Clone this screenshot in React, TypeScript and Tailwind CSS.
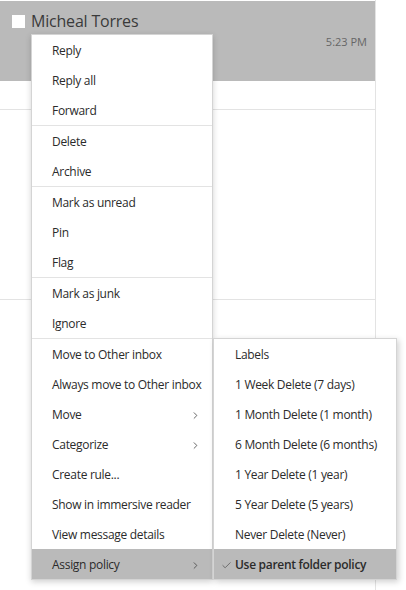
import { Check, ChevronRight } from "lucide-react";

type Item = { label: string; sub?: boolean; active?: boolean };

const groups: Item[][] = [
  [{ label: "Reply" }, { label: "Reply all" }, { label: "Forward" }],
  [{ label: "Delete" }, { label: "Archive" }],
  [{ label: "Mark as unread" }, { label: "Pin" }, { label: "Flag" }],
  [{ label: "Mark as junk" }, { label: "Ignore" }],
  [
    { label: "Move to Other inbox" },
    { label: "Always move to Other inbox" },
    { label: "Move", sub: true },
    { label: "Categorize", sub: true },
    { label: "Create rule..." },
    { label: "Show in immersive reader" },
    { label: "View message details" },
    { label: "Assign policy", sub: true, active: true },
  ],
];

const policies = [
  "1 Week Delete (7 days)",
  "1 Month Delete (1 month)",
  "6 Month Delete (6 months)",
  "1 Year Delete (1 year)",
  "5 Year Delete (5 years)",
  "Never Delete (Never)",
];

export default function App() {
  return (
    <div
      className="relative w-[406px] h-[590px] bg-white text-[#2b2b2b] overflow-hidden"
      style={{ fontFamily: '"Segoe UI", "Open Sans", "Noto Sans", sans-serif' }}
    >
      {/* message list */}
      <div className="w-[376px] h-full border-r border-[#e3e3e3] pt-px">
        <div className="h-[80px] bg-[#bababa] flex flex-col">
          <div className="flex items-center pl-3 pt-[10px]">
            <div className="w-[13px] h-[13px] bg-white" />
            <span className="ml-[6px] text-[16px] leading-[20px] text-[#3a3a3a] tracking-[-0.2px]">Micheal Torres</span>
          </div>
          <div className="text-right pr-2 text-[11px] text-[#666] mt-[3px]">5:23 PM</div>
        </div>
        <div className="h-[29px] border-b border-[#e3e3e3]" />
        <div className="h-[190px] border-b border-[#e3e3e3]" />
      </div>

      {/* context menu */}
      <div className="absolute left-[31px] top-[34px] w-[182px] bg-white border border-[#d4d4d4] shadow-[0_2px_6px_rgba(0,0,0,0.18)] text-[12px] tracking-[-0.3px]">
        {groups.map((g, gi) => (
          <div key={gi} className={gi > 0 ? "border-t border-[#e3e3e3]" : ""}>
            {g.map((it) => (
              <div
                key={it.label}
                className={`h-[30px] flex items-center justify-between pl-5 pr-[11px] pt-[2px] whitespace-nowrap ${it.active ? "bg-[#bababa]" : ""}`}
              >
                <span>{it.label}</span>
                {it.sub && <ChevronRight className="w-[11px] h-[11px] text-[#444]" strokeWidth={1.75} />}
              </div>
            ))}
          </div>
        ))}
      </div>

      {/* submenu */}
      <div className="absolute left-[213px] top-[338px] w-[184px] bg-white border border-[#d4d4d4] shadow-[2px_2px_6px_rgba(0,0,0,0.18)] text-[12px] tracking-[-0.3px] whitespace-nowrap">
        <div className="h-[30px] flex items-center pl-[21px] pt-[2px]">Labels</div>
        {policies.map((p) => (
          <div key={p} className="h-[30px] flex items-center pl-[21px] pt-[2px]">
            {p}
          </div>
        ))}
        <div className="h-[30px] flex items-center pl-[7px] pt-[2px] bg-[#bababa] font-semibold">
          <Check className="w-[11px] h-[11px] text-[#666] mr-[3px]" strokeWidth={2} />
          Use parent folder policy
        </div>
      </div>
    </div>
  );
}
